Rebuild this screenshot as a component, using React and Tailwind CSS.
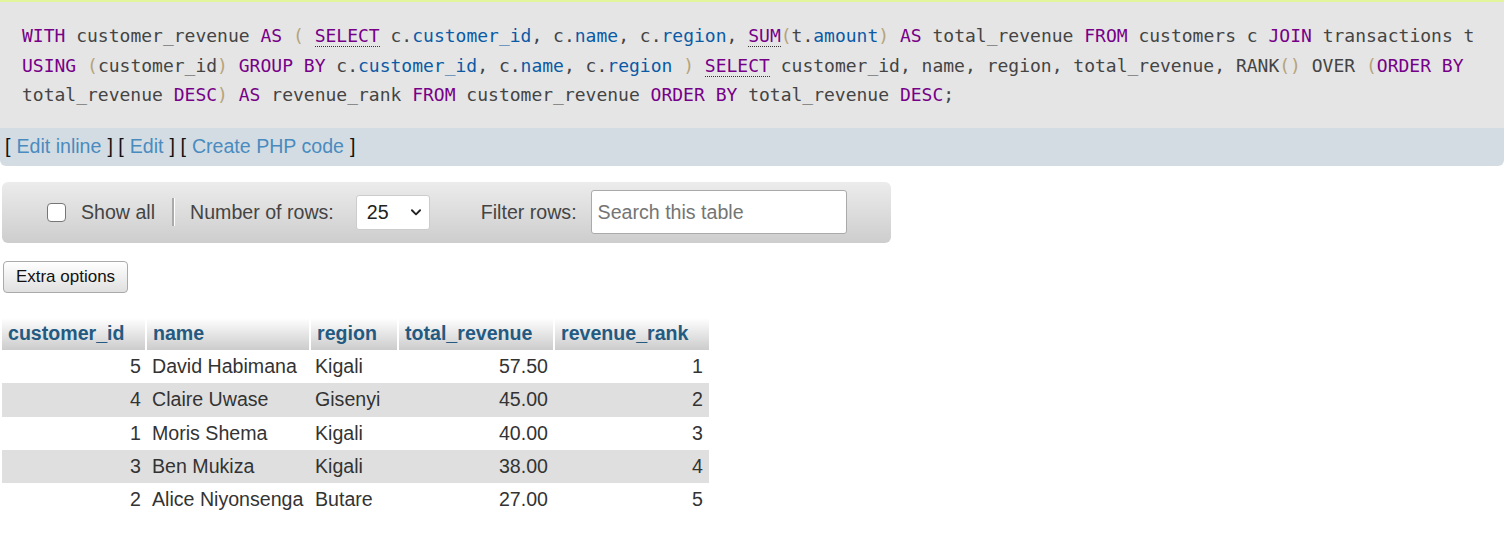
import React from "react";

const K = ({ children, u }) => (
  <span className={`text-[#770088] ${u ? "border-b border-dotted border-[#333]" : ""}`}>{children}</span>
);
const V = ({ children }) => <span className="text-[#0b5aa6]">{children}</span>;
const P = ({ children }) => <span className="text-[#b5a37a]">{children}</span>;

const rows = [
  [5, "David Habimana", "Kigali", "57.50", 1],
  [4, "Claire Uwase", "Gisenyi", "45.00", 2],
  [1, "Moris Shema", "Kigali", "40.00", 3],
  [3, "Ben Mukiza", "Kigali", "38.00", 4],
  [2, "Alice Niyonsenga", "Butare", "27.00", 5],
];

const cols = [
  { label: "customer_id", w: "w-[144px]" },
  { label: "name", w: "w-[164px]" },
  { label: "region", w: "w-[88px]" },
  { label: "total_revenue", w: "w-[156px]" },
  { label: "revenue_rank", w: "w-[155px]" },
];

export default function App() {
  return (
    <div className="min-h-[541px] bg-white font-['Liberation_Sans',Arial,sans-serif] text-[19.6px] text-[#333]">
      {/* sql box */}
      <div className="border-t-2 border-[#e3f59c] bg-[#e5e5e5] px-[22px] pt-[19px] pb-[18px] font-['DejaVu_Sans_Mono',monospace] text-[18px] leading-[29.6px] text-[#444] whitespace-nowrap">
        <div>
          <K>WITH</K> customer_revenue <K>AS</K> <P>(</P> <K u>SELECT</K> c.<V>customer_id</V>, c.<V>name</V>, c.<V>region</V>,{" "}
          <K u>SUM</K><P>(</P>t.<V>amount</V><P>)</P> <K>AS</K> total_revenue <K>FROM</K> customers c <K>JOIN</K> transactions t
        </div>
        <div>
          <K>USING</K> <P>(</P>customer_id<P>)</P> <K>GROUP BY</K> c.<V>customer_id</V>, c.<V>name</V>, c.<V>region</V> <P>)</P>{" "}
          <K u>SELECT</K> customer_id, name, region, total_revenue, RANK<P>()</P> OVER <P>(</P><K>ORDER BY</K>
        </div>
        <div>
          total_revenue <K>DESC</K><P>)</P> <K>AS</K> revenue_rank <K>FROM</K> customer_revenue <K>ORDER BY</K> total_revenue <K>DESC</K>;
        </div>
      </div>
      <div className="flex h-[38px] items-center rounded-b-[6px] bg-[#d3dce3] px-[5px] text-[#111]">
        <span>[</span>
        <a className="mx-[6px] text-[#4a8bbf]">Edit inline</a>
        <span>] [</span>
        <a className="mx-[6px] text-[#4a8bbf]">Edit</a>
        <span>] [</span>
        <a className="mx-[6px] text-[#4a8bbf]">Create PHP code</a>
        <span>]</span>
      </div>

      {/* navigation toolbar */}
      <div className="ml-[2px] mt-[16px] flex h-[61px] w-[889px] items-center rounded-[6px] bg-gradient-to-b from-[#ececec] to-[#cdcdcd] text-[#444]">
        <span className="ml-[45px] h-[19px] w-[19px] rounded-[4px] border border-[#767676] bg-white" />
        <span className="ml-[15px]">Show all</span>
        <span className="ml-[17px] h-[28px] w-[2px] bg-[#aaa] shadow-[1px_0_0_#fff]" />
        <span className="ml-[16px]">Number of rows:</span>
        <div className="ml-[22px] flex h-[35px] w-[74px] items-center justify-between rounded-[3px] border border-[#ccc] bg-white pl-[10px] pr-[6px] text-[#222]">
          <span>25</span>
          <svg width="14" height="14" viewBox="0 0 24 24" fill="none" stroke="#222" strokeWidth="3.2" strokeLinecap="round" strokeLinejoin="round">
            <path d="M5 9l7 7 7-7" />
          </svg>
        </div>
        <span className="ml-[51px]">Filter rows:</span>
        <div className="ml-[14px] flex h-[44px] w-[256px] items-center rounded-[3px] border border-[#aaa] bg-white px-[6px] text-[#757575]">
          Search this table
        </div>
      </div>

      <button className="ml-[3px] mt-[18px] flex h-[32px] w-[125px] items-center justify-center rounded-[4px] border border-[#aaa] bg-gradient-to-b from-[#fff] to-[#e0e0e0] text-[17px] text-[#111]">
        Extra options
      </button>

      {/* result table */}
      <table className="ml-[2px] mt-[25px] border-collapse">
        <thead>
          <tr>
            {cols.map((c, i) => (
              <th
                key={c.label}
                className={`${c.w} h-[32px] bg-gradient-to-b from-[#fff] to-[#cccccc] px-[6px] text-left font-bold text-[#235a81] ${i < cols.length - 1 ? "border-r-2 border-white" : ""}`}
              >
                {c.label}
              </th>
            ))}
          </tr>
        </thead>
        <tbody>
          {rows.map((r, i) => (
            <tr key={i} className={`h-[33.4px] ${i % 2 ? "bg-[#dfdfdf]" : "bg-white"}`}>
              <td className="px-[5px] text-right">{r[0]}</td>
              <td className="pl-[6px] pr-[5px] whitespace-nowrap">{r[1]}</td>
              <td className="px-[5px]">{r[2]}</td>
              <td className="px-[6px] text-right">{r[3]}</td>
              <td className="px-[6px] text-right">{r[4]}</td>
            </tr>
          ))}
        </tbody>
      </table>
    </div>
  );
}
